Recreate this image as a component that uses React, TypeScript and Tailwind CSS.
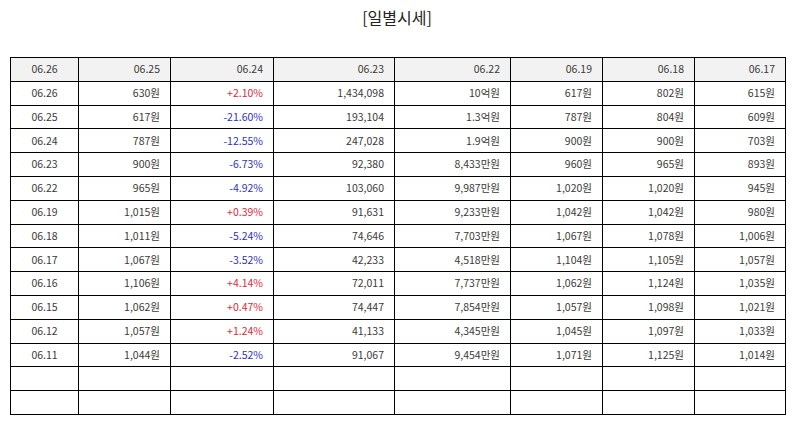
import React from "react"

type Row = {
  date: string
  price: string
  rate: string
  volume: string
  amount: string
  open: string
  high: string
  low: string
}

const headers = ["06.26", "06.25", "06.24", "06.23", "06.22", "06.19", "06.18", "06.17"]

const rows: Row[] = [
  { date: "06.26", price: "630원", rate: "+2.10%", volume: "1,434,098", amount: "10억원", open: "617원", high: "802원", low: "615원" },
  { date: "06.25", price: "617원", rate: "-21.60%", volume: "193,104", amount: "1.3억원", open: "787원", high: "804원", low: "609원" },
  { date: "06.24", price: "787원", rate: "-12.55%", volume: "247,028", amount: "1.9억원", open: "900원", high: "900원", low: "703원" },
  { date: "06.23", price: "900원", rate: "-6.73%", volume: "92,380", amount: "8,433만원", open: "960원", high: "965원", low: "893원" },
  { date: "06.22", price: "965원", rate: "-4.92%", volume: "103,060", amount: "9,987만원", open: "1,020원", high: "1,020원", low: "945원" },
  { date: "06.19", price: "1,015원", rate: "+0.39%", volume: "91,631", amount: "9,233만원", open: "1,042원", high: "1,042원", low: "980원" },
  { date: "06.18", price: "1,011원", rate: "-5.24%", volume: "74,646", amount: "7,703만원", open: "1,067원", high: "1,078원", low: "1,006원" },
  { date: "06.17", price: "1,067원", rate: "-3.52%", volume: "42,233", amount: "4,518만원", open: "1,104원", high: "1,105원", low: "1,057원" },
  { date: "06.16", price: "1,106원", rate: "+4.14%", volume: "72,011", amount: "7,737만원", open: "1,062원", high: "1,124원", low: "1,035원" },
  { date: "06.15", price: "1,062원", rate: "+0.47%", volume: "74,447", amount: "7,854만원", open: "1,057원", high: "1,098원", low: "1,021원" },
  { date: "06.12", price: "1,057원", rate: "+1.24%", volume: "41,133", amount: "4,345만원", open: "1,045원", high: "1,097원", low: "1,033원" },
  { date: "06.11", price: "1,044원", rate: "-2.52%", volume: "91,067", amount: "9,454만원", open: "1,071원", high: "1,125원", low: "1,014원" },
]

const widths = ["w-[68px]", "w-[92px]", "w-[103px]", "w-[121px]", "w-[116px]", "w-[92px]", "w-[92px]", "w-[91px]"]

const cell = "border-[1.5px] border-black h-[23.8px] p-0 pr-[10px] text-right"
const firstCell = "border-[1.5px] border-black h-[23.8px] p-0 text-center"

export default function App() {
  return (
    <div className="w-[794px] h-[425px] bg-white font-['Noto_Sans_CJK_KR','Noto_Sans',sans-serif] text-[#3a3a3a]">
      {/* Title */}
      <div className="pt-[5px] text-center text-[16px] leading-[24px] text-[#222]">[일별시세]</div>

      {/* Daily price table */}
      <div className="mt-[28px] px-[10px]">
        <table className="w-[775px] table-fixed border-collapse text-[10.5px] leading-none">
          <colgroup>
            {widths.map((w, i) => (
              <col key={i} className={w} />
            ))}
          </colgroup>
          <thead>
            <tr className="bg-[#f2f2f2]">
              {headers.map((h, i) => (
                <th key={h} className={`${i === 0 ? firstCell : cell} font-normal`}>
                  {h}
                </th>
              ))}
            </tr>
          </thead>
          <tbody>
            {rows.map((r) => (
              <tr key={r.date}>
                <td className={firstCell}>{r.date}</td>
                <td className={cell}>{r.price}</td>
                <td className={`${cell} ${r.rate.startsWith("+") ? "text-[#e0283a]" : "text-[#2f2fc4]"}`}>{r.rate}</td>
                <td className={cell}>{r.volume}</td>
                <td className={cell}>{r.amount}</td>
                <td className={cell}>{r.open}</td>
                <td className={cell}>{r.high}</td>
                <td className={cell}>{r.low}</td>
              </tr>
            ))}
            {[0, 1].map((k) => (
              <tr key={`empty-${k}`}>
                {headers.map((h, i) => (
                  <td key={h} className={i === 0 ? firstCell : cell}></td>
                ))}
              </tr>
            ))}
          </tbody>
        </table>
      </div>
    </div>
  )
}
